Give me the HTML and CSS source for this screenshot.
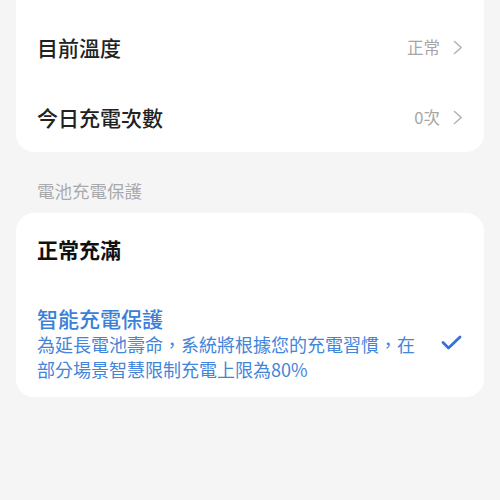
FILE: index.html
```html
<!DOCTYPE html>
<html lang="zh-Hant">
<head>
  <meta charset="UTF-8">
  <title>電池</title>
  <link rel="stylesheet" href="styles.css">
</head>
<body>

  <div class="card card-top">
    <div class="row">
      <span class="row-title">目前溫度</span>
      <span class="row-value">正常
        <svg class="chevron" width="10" height="15" viewBox="0 0 10 15"><path d="M1.5 1.5 L8.2 7.5 L1.5 13.5" fill="none" stroke="#b3b3b3" stroke-width="1.6" stroke-linecap="round" stroke-linejoin="round"/></svg>
      </span>
    </div>
    <div class="row">
      <span class="row-title">今日充電次數</span>
      <span class="row-value">0次
        <svg class="chevron" width="10" height="15" viewBox="0 0 10 15"><path d="M1.5 1.5 L8.2 7.5 L1.5 13.5" fill="none" stroke="#b3b3b3" stroke-width="1.6" stroke-linecap="round" stroke-linejoin="round"/></svg>
      </span>
    </div>
  </div>

  <div class="section-label">電池充電保護</div>

  <div class="card">
    <div class="row option">
      <span class="row-title strong">正常充滿</span>
    </div>
    <div class="row option selected">
      <div class="option-text">
        <div class="row-title">智能充電保護</div>
        <div class="option-desc">為延長電池壽命，系統將根據您的充電習慣，在部分場景智慧限制充電上限為80%</div>
      </div>
      <svg class="check" width="21" height="15" viewBox="0 0 21 15"><path d="M2 7.5 L7.5 13 L19 2" fill="none" stroke="#3b6fd4" stroke-width="2.8" stroke-linecap="round" stroke-linejoin="round"/></svg>
    </div>
  </div>

</body>
</html>
```

FILE: styles.css
```css
body {
  margin: 0;
  padding: 0 16px;
  background: #f5f5f5;
  font-family: "Noto Sans CJK TC", "Noto Sans", sans-serif;
  overflow: hidden;
}
.card {
  background: #fff;
  border-radius: 18px;
  padding: 0 22px 16px 21px;
}
.card-top {
  margin-top: -20px;
  padding-top: 32px;
  padding-bottom: 0;
}
.row {
  height: 70px;
  display: flex;
  align-items: center;
  justify-content: space-between;
}
.row-title {
  font-size: 21px;
  font-weight: 500;
  color: #222;
  line-height: 28px;
}
.row-title.strong {
  color: #111;
  font-weight: 700;
}
.row-value {
  display: flex;
  align-items: center;
  gap: 13px;
  font-size: 16.5px;
  color: #a6a6a6;
}
.chevron {
  margin-right: -1px;
}
.section-label {
  font-size: 17.5px;
  line-height: 24px;
  color: #a9a9ae;
  padding-left: 21px;
  margin: 27px 0 10px;
}
.option {
  height: 72px;
}
.option.selected {
  height: auto;
  padding-top: 19px;
}
.option.selected .row-title {
  color: #3b80d8;
}
.option-text {
  width: 384px;
}
.option-desc {
  font-size: 18px;
  line-height: 24.5px;
  color: #4385d8;
}
.check {
  flex-shrink: 0;
}
```
